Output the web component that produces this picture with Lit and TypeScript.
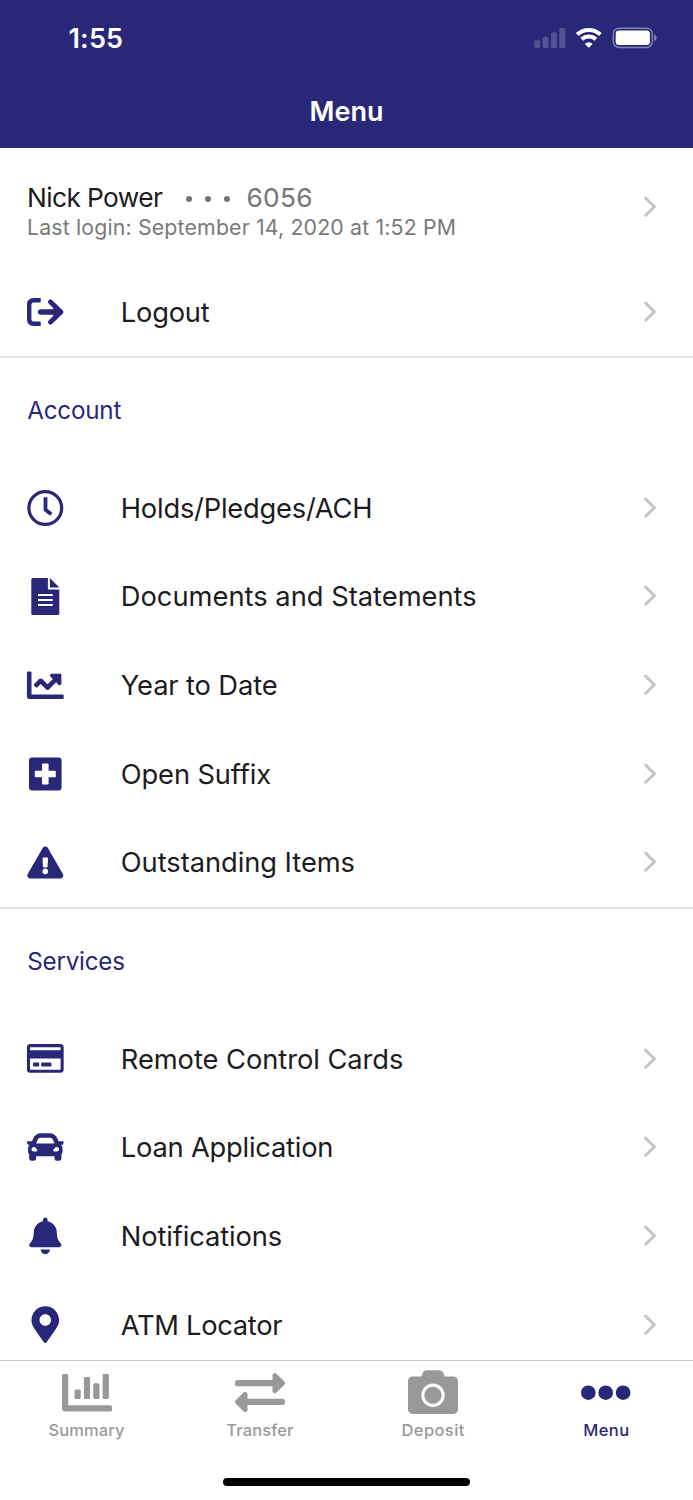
import { LitElement, html, css, svg, type SVGTemplateResult } from "lit";
import { customElement } from "lit/decorators.js";
import { classMap } from "lit/directives/class-map.js";

// Every glyph is drawn around (0, 0) in CSS pixels.
const fit = (scale: number, w: number, h: number, d: string, dy = 0) =>
  svg`<path transform="translate(${(-w * scale) / 2} ${(-h * scale) / 2 + dy}) scale(${scale})" d=${d}></path>`;
const S = 0.0718;

const icons: Record<string, SVGTemplateResult> = {
  logout: svg`<g fill="none" stroke="currentColor">
    <path stroke-width="4.4" d="M-4.6-11.7H-11.6Q-16.1-11.7-16.1-7.2V7.2Q-16.1 11.7-11.6 11.7H-4.6"></path>
    <path stroke-width="5.6" stroke-linecap="round" d="M-4.6 0H11"></path>
    <path stroke-width="5" stroke-linecap="round" stroke-linejoin="round" d="M5.2-10L15.6 0L5.2 10"></path></g>
    <path d="M8-5.5L14 0L8 5.5z"></path>`,
  clock: svg`<g fill="none" stroke="currentColor">
    <circle r="16.4" stroke-width="3.2"></circle>
    <path stroke-width="3.8" stroke-linejoin="round" d="M.2-10.8V1.8L6 6.2"></path></g>`,
  doc: svg`<g transform="translate(0 .6)"><path d="M-12.6-18.5H2.6V-7H14V17Q14 18.5 12.6 18.5H-12.6Q-14 18.5-14 17V-17Q-14-18.5-12.6-18.5z"></path>
    <path d="M4.6-18.5L14-9.2H4.6z"></path>
    <path fill="none" stroke="#fff" stroke-width="2" d="M-7.3-1.7H7.5M-7.3 3.3H7.5M-7.3 8.3H7.5"></path></g>`,
  chart: fit(S, 512, 512, "M496 384H64V80c0-8.84-7.16-16-16-16H16C7.16 64 0 71.16 0 80v336c0 17.67 14.33 32 32 32h464c8.84 0 16-7.16 16-16v-32c0-8.84-7.16-16-16-16zM464 96H345.94c-21.38 0-32.09 25.85-16.97 40.97l32.4 32.4L288 242.75l-73.37-73.37c-12.5-12.5-32.76-12.5-45.25 0l-68.69 68.69c-6.25 6.25-6.25 16.38 0 22.63l22.62 22.62c6.25 6.25 16.38 6.25 22.63 0L192 237.25l73.37 73.37c12.5 12.5 32.76 12.5 45.25 0l96-96 32.4 32.4c15.12 15.12 40.97 4.41 40.97-16.97V112c.01-8.84-7.15-16-15.99-16z", 0.3),
  plus: svg`<rect x="-16.3" y="-16.4" width="32.6" height="32.8" rx="3.2"></rect>
    <path fill="#fff" d="M-2.4-10.5H2.4Q3.3-10.5 3.3-9.6V-3.3H9.6Q10.5-3.3 10.5-2.4V2.4Q10.5 3.3 9.6 3.3H3.3V9.6Q3.3 10.5 2.4 10.5H-2.4Q-3.3 10.5-3.3 9.6V3.3H-9.6Q-10.5 3.3-10.5 2.4V-2.4Q-10.5-3.3-9.6-3.3H-3.3V-9.6Q-3.3-10.5-2.4-10.5z"></path>`,
  warn: fit(0.0625, 576, 512, "M569.517 440.013C587.975 472.007 564.806 512 527.94 512H48.054c-36.937 0-59.999-40.055-41.577-71.987L246.423 23.985c18.467-32.009 64.72-31.951 83.154 0l239.94 416.028zM288 354c-25.405 0-46 20.595-46 46s20.595 46 46 46 46-20.595 46-46-20.595-46-46-46zm-43.673-165.346l7.418 136c.347 6.364 5.609 11.346 11.982 11.346h48.546c6.373 0 11.635-4.982 11.982-11.346l7.418-136c.375-6.874-5.098-12.654-11.982-12.654h-63.383c-6.884 0-12.356 5.78-11.981 12.654z", 0.4),
  card: fit(0.0638, 576, 512, "M527.9 32H48.1C21.5 32 0 53.5 0 80v352c0 26.5 21.5 48 48.1 48h479.8c26.6 0 48.1-21.5 48.1-48V80c0-26.5-21.5-48-48.1-48zM54.1 80h467.8c3.3 0 6 2.7 6 6v42H48.1V86c0-3.3 2.7-6 6-6zm467.8 352H54.1c-3.3 0-6-2.7-6-6V256h479.8v170c0 3.3-2.7 6-6 6zM192 332v40c0 6.6-5.4 12-12 12h-72c-6.6 0-12-5.4-12-12v-40c0-6.6 5.4-12 12-12h72c6.6 0 12 5.4 12 12zm192 0v40c0 6.6-5.4 12-12 12H236c-6.6 0-12-5.4-12-12v-40c0-6.6 5.4-12 12-12h136c6.6 0 12 5.4 12 12z", -0.6),
  car: fit(S, 512, 512, "M499.99 176h-59.87l-16.64-41.6C406.38 91.63 365.57 64 319.5 64h-127c-46.06 0-86.88 27.63-103.99 70.4L71.87 176H12.01C4.2 176-1.53 183.34.37 190.91l6 24C7.7 220.25 12.5 224 18.01 224h20.07C24.65 235.73 16 252.78 16 272v48c0 16.12 6.16 30.67 16 41.93V416c0 17.67 14.33 32 32 32h32c17.67 0 32-14.33 32-32v-32h256v32c0 17.67 14.33 32 32 32h32c17.67 0 32-14.33 32-32v-54.07c9.84-11.25 16-25.8 16-41.93v-48c0-19.22-8.65-36.27-22.07-48H494c5.51 0 10.31-3.75 11.64-9.09l6-24c1.89-7.57-3.84-14.91-11.65-14.91zm-352.06-17.83c7.29-18.22 24.94-30.17 44.57-30.17h127c19.63 0 37.28 11.95 44.57 30.17L384 208H128l19.93-49.83zM96 319.8c-19.2 0-32-12.76-32-31.9S76.8 256 96 256s48 28.71 48 47.85-28.8 15.95-48 15.95zm320 0c-19.2 0-48 3.19-48-15.95S396.8 256 416 256s32 12.76 32 31.9-12.8 31.9-32 31.9z"),
  bell: fit(S, 448, 512, "M224 512c35.32 0 63.97-28.65 63.97-64H160.03c0 35.35 28.65 64 63.97 64zm215.39-149.71c-19.32-20.76-55.47-51.99-55.47-154.29 0-77.7-54.48-139.9-127.94-155.16V32c0-17.67-14.32-32-31.98-32s-31.98 14.33-31.98 32v20.84C118.56 68.1 64.08 130.3 64.08 208c0 102.3-36.15 133.53-55.47 154.29-6 6.45-8.66 14.16-8.61 21.71.11 16.4 12.98 32 32.1 32h383.8c19.12 0 32-15.6 32.1-32 .05-7.55-2.61-15.27-8.61-21.71z", -0.2),
  pin: fit(S, 384, 512, "M172.268 501.67C26.97 291.031 0 269.413 0 192 0 85.961 85.961 0 192 0s192 85.961 192 192c0 77.413-26.97 99.031-172.268 309.67-9.535 13.774-29.93 13.773-39.464 0zM192 272c44.183 0 80-35.817 80-80s-35.817-80-80-80-80 35.817-80 80 35.817 80 80 80z", -0.4),
  bars: fit(0.0976, 512, 512, "M332.8 320h38.4c6.4 0 12.8-6.4 12.8-12.8V172.8c0-6.4-6.4-12.8-12.8-12.8h-38.4c-6.4 0-12.8 6.4-12.8 12.8v134.4c0 6.4 6.4 12.8 12.8 12.8zm96 0h38.4c6.4 0 12.8-6.4 12.8-12.8V76.8c0-6.4-6.4-12.8-12.8-12.8h-38.4c-6.4 0-12.8 6.4-12.8 12.8v230.4c0 6.4 6.4 12.8 12.8 12.8zm-288 0h38.4c6.4 0 12.8-6.4 12.8-12.8v-70.4c0-6.4-6.4-12.8-12.8-12.8h-38.4c-6.4 0-12.8 6.4-12.8 12.8v70.4c0 6.4 6.4 12.8 12.8 12.8zm96 0h38.4c6.4 0 12.8-6.4 12.8-12.8V108.8c0-6.4-6.4-12.8-12.8-12.8h-38.4c-6.4 0-12.8 6.4-12.8 12.8v198.4c0 6.4 6.4 12.8 12.8 12.8zM496 384H64V80c0-8.84-7.16-16-16-16H16C7.16 64 0 71.16 0 80v336c0 17.67 14.33 32 32 32h464c8.84 0 16-7.16 16-16v-32c0-8.84-7.16-16-16-16z", -0.3),
  transfer: fit(0.0976, 512, 512, "M0 168v-16c0-13.255 10.745-24 24-24h360V80c0-21.367 25.899-32.042 40.971-16.971l80 80c9.372 9.373 9.372 24.569 0 33.941l-80 80C409.956 271.982 384 261.456 384 240v-48H24c-13.255 0-24-10.745-24-24zm488 152H128v-48c0-21.314-25.862-32.08-40.971-16.971l-80 80c-9.372 9.373-9.372 24.569 0 33.941l80 80C102.057 463.997 128 453.437 128 432v-48h360c13.255 0 24-10.745 24-24v-16c0-13.255-10.745-24-24-24z", -0.5),
  camera: fit(0.0976, 512, 512, "M512 144v288c0 26.5-21.5 48-48 48H48c-26.5 0-48-21.5-48-48V144c0-26.5 21.5-48 48-48h88l12.3-32.9c7-18.7 24.9-31.1 44.9-31.1h125.5c20 0 37.9 12.4 44.9 31.1L376 96h88c26.5 0 48 21.5 48 48zM376 288c0-66.2-53.8-120-120-120s-120 53.8-120 120 53.8 120 120 120 120-53.8 120-120zm-32 0c0 48.5-39.5 88-88 88s-88-39.5-88-88 39.5-88 88-88 88 39.5 88 88z", -0.9),
  dots: svg`<g transform="translate(-.3 -.3)"><circle cx="-17.4" r="7.3"></circle><circle r="7.3"></circle><circle cx="17.4" r="7.3"></circle></g>`,
};

const glyph = (name: string, box = "-28 -28 56 56") =>
  html`<svg class="glyph" viewBox=${box} fill="currentColor" aria-hidden="true">${icons[name]}</svg>`;

const chevron = html`<svg class="chevron" viewBox="0 0 14 22" aria-hidden="true">
  <path d="M2.7 2.1L11.4 10.7L2.7 19.3" fill="none" stroke="#c5c5c7" stroke-width="3" stroke-linecap="round" stroke-linejoin="round"></path></svg>`;

interface Item { icon: string; label: string; cls: string }
const account: Item[] = [
  { icon: "clock", label: "Holds/Pledges/ACH", cls: "t2" },
  { icon: "doc", label: "Documents and Statements", cls: "t0" },
  { icon: "chart", label: "Year to Date", cls: "t1" },
  { icon: "plus", label: "Open Suffix", cls: "t1" },
  { icon: "warn", label: "Outstanding Items", cls: "t05" },
];
const services: Item[] = [
  { icon: "card", label: "Remote Control Cards", cls: "t05" },
  { icon: "car", label: "Loan Application", cls: "t2" },
  { icon: "bell", label: "Notifications", cls: "t1" },
  { icon: "pin", label: "ATM Locator", cls: "t4" },
];
const tabs: Item[] = [
  { icon: "bars", label: "Summary", cls: "" },
  { icon: "transfer", label: "Transfer", cls: "" },
  { icon: "camera", label: "Deposit", cls: "wide" },
  { icon: "dots", label: "Menu", cls: "wide" },
];

@customElement("app-root")
export class AppRoot extends LitElement {
  static styles = css`
    :host { display: block; font-family: "Inter", "Liberation Sans", sans-serif; color: #1c1c1e; }
    * { box-sizing: border-box; }
    svg { display: block; flex: none; }
    .screen { display: flex; flex-direction: column; height: 1500px; background: #fff; overflow: hidden; white-space: nowrap; }
    header { flex: none; height: 147.6px; background: #292878; color: #fff; }
    .status { height: 76px; padding: 0 36px 0 68.5px; display: flex; align-items: center; justify-content: space-between; }
    .time { padding-top: 2px; font-size: 27px; font-weight: 600; letter-spacing: .2px; line-height: 32px; }
    .title { margin: 0; height: 71px; line-height: 71px; text-align: center; font-size: 27px; font-weight: 600; letter-spacing: .05px; }
    main { flex: 1; min-height: 0; overflow: hidden; }
    section + section { border-top: 2px solid #e2e2e4; }
    .profile { height: 119.7px; padding: 0 36px 0 27px; display: flex; align-items: center; justify-content: space-between; }
    .who { padding-top: 8px; }
    .name { display: flex; align-items: center; height: 32px; font-size: 26.3px; letter-spacing: -.6px; }
    .mask { display: flex; gap: 13px; margin: 3px 16.8px 0 23.4px; }
    .mask i { width: 6px; height: 6px; border-radius: 50%; background: #757577; }
    .num { color: #757577; letter-spacing: .3px; }
    .last { line-height: 28px; font-size: 21.3px; letter-spacing: .16px; color: #79797b; }
    .row { height: 88.7px; padding: 0 36px 0 17px; display: flex; align-items: center; }
    .row .glyph { color: #292878; }
    .glyph { width: 56px; height: 56px; }
    .label { flex: 1; padding: 1px 0 0 47.8px; font-size: 27.3px; }
    .t05 { letter-spacing: -.055px; }
    .t1 { letter-spacing: -.13px; }
    .t2 { letter-spacing: -.22px; }
    .t4 { letter-spacing: -.3px; }
    .chevron { width: 14px; height: 22px; }
    h2 { margin: 0; height: 105.4px; line-height: 105px; padding-left: 27.3px; font-size: 24.2px; font-weight: 400; letter-spacing: -.22px; color: #292878; }
    nav { flex: none; height: 140px; border-top: 1px solid #c9c9cb; display: flex; flex-direction: column; align-items: center; }
    .tabs { width: 100%; height: 117px; padding-top: 3.6px; display: grid; grid-template-columns: repeat(4, 1fr); }
    .tab { display: flex; flex-direction: column; align-items: center; color: #999; font-size: 16.5px; font-weight: 500; line-height: 18.6px; letter-spacing: .12px; }
    .wide { letter-spacing: .38px; }
    .active { color: #292878; }
    .home { width: 247.5px; height: 8.4px; border-radius: 5px; background: #000; }
  `;

  private row(i: Item) {
    return html`<div class="row">${glyph(i.icon, "-28.3 -28 56 56")}<span class="label ${i.cls}">${i.label}</span>${chevron}</div>`;
  }

  render() {
    return html`<div class="screen">
      <header>
        <div class="status">
          <span class="time">1:55</span>
          <svg width="123" height="24" viewBox="534 26 123 24" aria-hidden="true">
            <g fill="#fff" fill-opacity=".2">
              <rect x="534.2" y="40.3" width="6" height="7.7" rx="1.6"></rect>
              <rect x="542.6" y="36.8" width="6" height="11.2" rx="1.6"></rect>
              <rect x="551" y="32.3" width="6" height="15.7" rx="1.6"></rect>
              <rect x="559.3" y="28" width="6" height="20" rx="1.6"></rect>
            </g>
            <g fill="none" stroke="#fff" stroke-width="4.1">
              <path d="M577.2 34.5A17 17 0 0 1 600.4 34.5"></path>
              <path d="M581.7 39.3A10.4 10.4 0 0 1 595.9 39.3"></path>
            </g>
            <path fill="#fff" stroke="#fff" stroke-linejoin="round" d="M585.4 43.9Q588.8 41.4 592.2 43.9L588.8 47.3z"></path>
            <rect x="613.3" y="28.2" width="39" height="19.2" rx="5.6" fill="none" stroke="#fff" stroke-opacity=".42" stroke-width="1.5"></rect>
            <rect x="615.7" y="30.6" width="34.2" height="14.4" rx="3.2" fill="#fff"></rect>
            <path d="M654.2 34.3Q656.6 35.3 656.6 37.8T654.2 41.3z" fill="#fff" fill-opacity=".45"></path>
          </svg>
        </div>
        <h1 class="title">Menu</h1>
      </header>
      <main>
        <section>
          <div class="profile">
            <div class="who">
              <div class="name"><span>Nick Power</span><span class="mask"><i></i><i></i><i></i></span><span class="num">6056</span></div>
              <div class="last">Last login: September 14, 2020 at 1:52 PM</div>
            </div>
            ${chevron}
          </div>
          ${this.row({ icon: "logout", label: "Logout", cls: "t2" })}
        </section>
        <section><h2>Account</h2>${account.map((i) => this.row(i))}</section>
        <section><h2>Services</h2>${services.map((i) => this.row(i))}</section>
      </main>
      <nav>
        <div class="tabs">
          ${tabs.map((t) => html`<div class=${classMap({ tab: true, wide: t.cls === "wide", active: t.label === "Menu" })}>${glyph(t.icon)}<span>${t.label}</span></div>`)}
        </div>
        <div class="home"></div>
      </nav>
    </div>`;
  }
}
